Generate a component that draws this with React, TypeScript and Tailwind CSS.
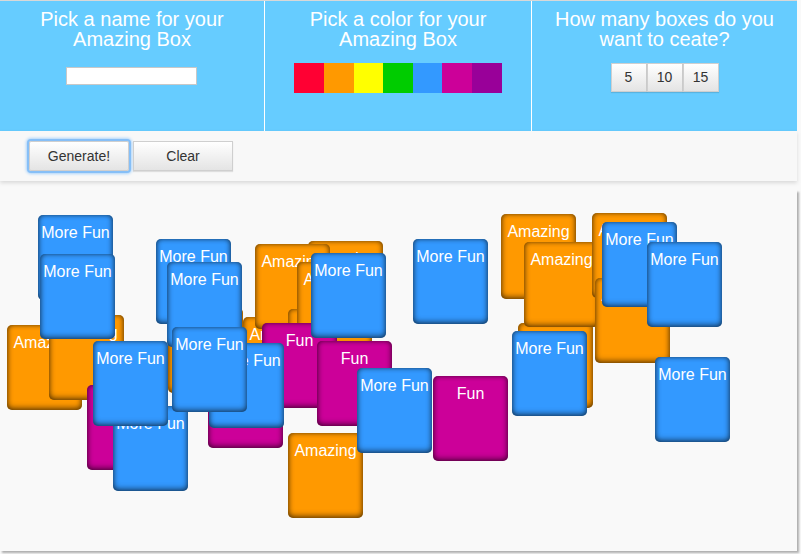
import React from 'react';

type Box = { x: number; y: number; color: string; label: string };

const BLUE = 'bg-[#3399ff]';
const ORANGE = 'bg-[#ff9900]';
const PINK = 'bg-[#cc0099]';

const CANVAS_TOP = 190;

// drawn in order, later ones sit on top
const boxes: Box[] = [
  { x: 38, y: 215, color: BLUE, label: 'More Fun' },
  { x: 7, y: 325, color: ORANGE, label: 'Amazing' },
  { x: 49, y: 315, color: ORANGE, label: 'Amazing' },
  { x: 40, y: 254, color: BLUE, label: 'More Fun' },
  { x: 87, y: 385, color: PINK, label: 'Fun' },
  { x: 113, y: 406, color: BLUE, label: 'More Fun' },
  { x: 93, y: 341, color: BLUE, label: 'More Fun' },
  { x: 156, y: 239, color: BLUE, label: 'More Fun' },
  { x: 168, y: 308, color: ORANGE, label: 'Amazing' },
  { x: 167, y: 262, color: BLUE, label: 'More Fun' },
  { x: 208, y: 363, color: PINK, label: 'Fun' },
  { x: 308, y: 241, color: ORANGE, label: 'Amazing' },
  { x: 243, y: 317, color: ORANGE, label: 'Amazing' },
  { x: 255, y: 244, color: ORANGE, label: 'Amazing' },
  { x: 288, y: 309, color: ORANGE, label: 'Amazing' },
  { x: 297, y: 262, color: ORANGE, label: 'Amazing' },
  { x: 262, y: 323, color: PINK, label: 'Fun' },
  { x: 311, y: 253, color: BLUE, label: 'More Fun' },
  { x: 209, y: 343, color: BLUE, label: 'More Fun' },
  { x: 172, y: 327, color: BLUE, label: 'More Fun' },
  { x: 317, y: 341, color: PINK, label: 'Fun' },
  { x: 288, y: 433, color: ORANGE, label: 'Amazing' },
  { x: 357, y: 368, color: BLUE, label: 'More Fun' },
  { x: 433, y: 376, color: PINK, label: 'Fun' },
  { x: 413, y: 239, color: BLUE, label: 'More Fun' },
  { x: 501, y: 214, color: ORANGE, label: 'Amazing' },
  { x: 518, y: 323, color: ORANGE, label: 'Amazing' },
  { x: 524, y: 242, color: ORANGE, label: 'Amazing' },
  { x: 512, y: 331, color: BLUE, label: 'More Fun' },
  { x: 592, y: 213, color: ORANGE, label: 'Amazing' },
  { x: 595, y: 278, color: ORANGE, label: 'Amazing' },
  { x: 602, y: 222, color: BLUE, label: 'More Fun' },
  { x: 647, y: 242, color: BLUE, label: 'More Fun' },
  { x: 655, y: 357, color: BLUE, label: 'More Fun' },
];

const swatches = [
  'bg-[#ff0033]',
  'bg-[#ff9900]',
  'bg-[#ffff00]',
  'bg-[#00cc00]',
  'bg-[#3399ff]',
  'bg-[#cc0099]',
  'bg-[#990099]',
];

const btn =
  'bg-gradient-to-b from-white to-[#e4e4e4] border border-[#cfcfcf] text-[14px] text-[#333]';

export default function App() {
  return (
    <div className="w-[801px] h-[554px] overflow-hidden bg-[#f9f9f9] font-['Liberation_Sans',Arial,sans-serif]">
      <div className="w-[797px]">
        {/* Header */}
        <header className="grid grid-cols-[264px_267px_266px] h-[131px] border-t border-[#d8d8d8] bg-[#66ccff] text-white">
          <div className="flex flex-col items-center pt-[8px]">
            <h2 className="text-[20px] leading-[20px] text-center">
              Pick a name for your
              <br />
              Amazing Box
            </h2>
            <input
              type="text"
              className="mt-[18px] w-[131px] h-[18px] -translate-x-px bg-white border border-[#c8c8c8] outline-none"
            />
          </div>
          <div className="flex flex-col items-center pt-[8px] border-l border-white">
            <h2 className="text-[20px] leading-[20px] text-center">
              Pick a color for your
              <br />
              Amazing Box
            </h2>
            <div className="mt-[14px] flex">
              {swatches.map((c, i) => (
                <div key={i} className={`w-[29.6px] h-[30px] ${c}`} />
              ))}
            </div>
          </div>
          <div className="flex flex-col items-center pt-[8px] border-l border-white">
            <h2 className="text-[20px] leading-[20px] text-center">
              How many boxes do you
              <br />
              want to ceate?
            </h2>
            <div className="mt-[14px] flex">
              {['5', '10', '15'].map((n) => (
                <button key={n} className={`w-[36px] h-[29px] shadow-[0_1px_1px_rgba(0,0,0,0.12)] ${btn}`}>
                  {n}
                </button>
              ))}
            </div>
          </div>
        </header>

        {/* Toolbar */}
        <div className="h-[50px] bg-[#f8f8f8] shadow-[0_2px_4px_rgba(0,0,0,0.13)] flex items-start gap-[4px] pl-[29px] pt-[10px] relative z-10">
          <button className={`w-[100px] h-[30px] rounded-[2px] ${btn} shadow-[0_0_0_2px_#86bff7,0_0_3px_3px_#a9d3fb]`}>
            Generate!
          </button>
          <button className={`w-[100px] h-[30px] shadow-[0_1px_1px_rgba(0,0,0,0.1)] ${btn}`}>Clear</button>
        </div>

        {/* Canvas */}
        <div className="relative mt-[9px] h-[361px] bg-[#f9f9f9] shadow-[2px_2px_2px_rgba(0,0,0,0.3)]">
          {boxes.map((b, i) => (
            <div
              key={i}
              className={`absolute w-[75px] h-[85px] rounded-[5px] ${b.color} shadow-[inset_0_-2px_6px_rgba(0,0,0,0.45),inset_0_0_5px_rgba(0,0,0,0.45)] pt-[9px] text-center text-white text-[16px] leading-[18px] whitespace-nowrap overflow-hidden`}
              style={{ left: b.x, top: b.y - CANVAS_TOP }}
            >
              {b.label}
            </div>
          ))}
        </div>
      </div>
    </div>
  );
}
